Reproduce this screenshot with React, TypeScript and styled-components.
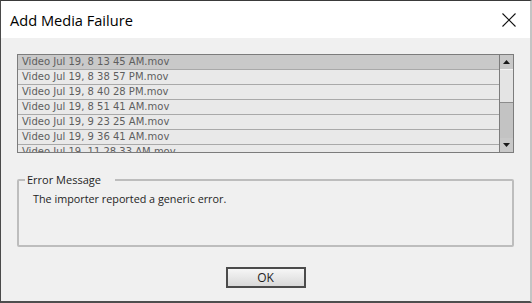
import * as React from 'react';
import styled, { createGlobalStyle } from 'styled-components';

const GlobalStyle = createGlobalStyle`
  html, body {
    margin: 0;
    padding: 0;
    background: #ffffff;
  }
`;

const files = [
  'Video Jul 19, 8 13 45 AM.mov',
  'Video Jul 19, 8 38 57 PM.mov',
  'Video Jul 19, 8 40 28 PM.mov',
  'Video Jul 19, 8 51 41 AM.mov',
  'Video Jul 19, 9 23 25 AM.mov',
  'Video Jul 19, 9 36 41 AM.mov',
  'Video Jul 19, 11 28 33 AM.mov',
];

const Window = styled.div`
  width: 532px;
  height: 303px;
  box-sizing: border-box;
  display: flex;
  flex-direction: column;
  border-top: 1px solid #3a3a3a;
  border-left: 1px solid #4a4a4a;
  border-right: 2px solid #c4c4c4;
  border-bottom: 2px solid #4e4e4e;
  background: #f0f0f0;
  font-family: "Open Sans", "Noto Sans", sans-serif;
`;

const TitleBar = styled.div`
  height: 37px;
  flex: none;
  display: flex;
  align-items: center;
  justify-content: space-between;
  padding: 0 14px 0 9px;
  background: #ffffff;
`;

const Title = styled.div`
  font-size: 14.6px;
  color: #000000;
`;

const CloseButton = styled.div`
  width: 14px;
  height: 14px;
  display: flex;
`;

const Body = styled.div`
  flex: 1;
  display: flex;
  flex-direction: column;
  padding: 16px 16px 0 16px;
`;

const ListBox = styled.div`
  height: 99px;
  flex: none;
  box-sizing: border-box;
  border: 1px solid #7c7c7c;
  display: flex;
  overflow: hidden;
  background: #e8e8e8;
`;

const Rows = styled.div`
  flex: 1;
  overflow: hidden;
`;

const Row = styled.div<{ $selected?: boolean }>`
  height: 14px;
  line-height: 14px;
  border-bottom: 1px solid #a9a9a9;
  background: ${p => (p.$selected ? '#c9c9c9' : '#e9e9e9')};
  color: #5e5e5e;
  font-family: "DejaVu Sans", sans-serif;
  font-size: 10px;
  padding-left: 4px;
  white-space: nowrap;
`;

const ScrollBar = styled.div`
  width: 13px;
  flex: none;
  display: flex;
  flex-direction: column;
  border-left: 1px solid #7c7c7c;
  background: #c3c3c3;
`;

const ArrowBox = styled.div`
  height: 14px;
  flex: none;
  display: flex;
  align-items: center;
  justify-content: center;
  background: #c8c8c8;
`;

const Thumb = styled.div`
  height: 34px;
  flex: none;
  box-sizing: border-box;
  background: #e4e4e4;
  border-bottom: 1px solid #8c8c8c;
  border-top: 1px solid #f4f4f4;
`;

const Track = styled.div`
  flex: 1;
`;

const GroupBox = styled.fieldset`
  margin: 20px 0 0 0;
  padding: 0 0 0 14px;
  height: 74px;
  flex: none;
  box-sizing: border-box;
  border: 2px solid #bdbdbd;
  border-radius: 2px;
  min-width: 0;
`;

const Legend = styled.legend`
  padding: 0 14px 0 2px;
  margin-left: -8px;
  font-size: 11px;
  color: #1e1e1e;
  line-height: 14px;
`;

const Message = styled.div`
  font-size: 10.8px;
  color: #1e1e1e;
  margin-top: 4px;
`;

const Footer = styled.div`
  flex: 1;
  display: flex;
  justify-content: center;
  padding-top: 20px;
`;

const Button = styled.button`
  width: 80px;
  height: 21px;
  box-sizing: border-box;
  border: 2px solid #4b4b4b;
  background: linear-gradient(#f6f6f6, #d9d9d9);
  font-family: "Open Sans", "Noto Sans", sans-serif;
  font-size: 12px;
  color: #1e1e1e;
  padding: 0;
  line-height: 17px;
`;

const UpArrow = () => (
  <svg width="7" height="4" viewBox="0 0 7 4">
    <polygon points="0,4 3.5,0 7,4" fill="#1a1a1a" />
  </svg>
);

const DownArrow = () => (
  <svg width="7" height="4" viewBox="0 0 7 4">
    <polygon points="0,0 7,0 3.5,4" fill="#1a1a1a" />
  </svg>
);

const CloseIcon = () => (
  <svg width="14" height="14" viewBox="0 0 14 14">
    <path d="M0.5 0.5 L13.5 13.5 M13.5 0.5 L0.5 13.5" stroke="#111" strokeWidth="1.1" />
  </svg>
);

export default function App() {
  return (
    <>
      <GlobalStyle />
      <Window>
        <TitleBar>
          <Title>Add Media Failure</Title>
          <CloseButton><CloseIcon /></CloseButton>
        </TitleBar>
        <Body>
          <ListBox>
            <Rows>
              {files.map((f, i) => (
                <Row key={f} $selected={i === 0}>{f}</Row>
              ))}
            </Rows>
            <ScrollBar>
              <ArrowBox><UpArrow /></ArrowBox>
              <Thumb />
              <Track />
              <ArrowBox><DownArrow /></ArrowBox>
            </ScrollBar>
          </ListBox>
          <GroupBox>
            <Legend>Error Message</Legend>
            <Message>The importer reported a generic error.</Message>
          </GroupBox>
          <Footer>
            <Button>OK</Button>
          </Footer>
        </Body>
      </Window>
    </>
  );
}
